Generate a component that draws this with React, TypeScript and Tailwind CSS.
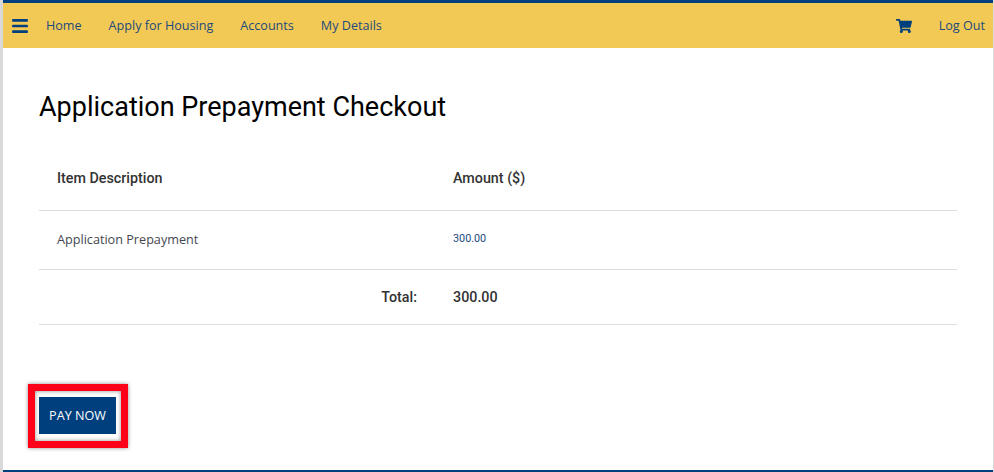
import { FaBars, FaShoppingCart } from 'react-icons/fa';

const NAV_ITEMS = ['Home', 'Apply for Housing', 'Accounts', 'My Details'];

function TopBar() {
  return (
    <header className="flex h-[48px] items-center border-t-[3px] border-[#003f7d] bg-[#f3c955] pt-[1px] text-[12.6px] text-[#1d4a7c] [font-family:'Open_Sans',sans-serif]">
      <FaBars className="ml-[9px] h-[18px] w-[16px] text-[#003f7d]" />
      <nav className="ml-[18px] flex gap-[27px]">
        {NAV_ITEMS.map((item) => (
          <span key={item}>{item}</span>
        ))}
      </nav>
      <FaShoppingCart className="ml-auto h-[16px] w-[16px] text-[#003f7d]" />
      <span className="ml-[27px] mr-[8px]">Log Out</span>
    </header>
  );
}

function CheckoutTable() {
  return (
    <div className="mt-[26px] [font-family:Roboto,sans-serif]">
      <div className="flex h-[60px] items-center border-b border-[#dddddd] pb-[3px] text-[14.3px] font-medium text-[#333333]">
        <span className="ml-[18px] w-[396px]">Item Description</span>
        <span>Amount ($)</span>
      </div>
      <div className="flex h-[59px] items-center border-b border-[#dddddd] pb-[1px]">
        <span className="ml-[18px] w-[396px] text-[12.65px] text-[#45464f] [font-family:'Open_Sans',sans-serif]">
          Application Prepayment
        </span>
        <span className="text-[10.8px] text-[#1d4a7c]">300.00</span>
      </div>
      <div className="flex h-[55px] items-center border-b border-[#dddddd] pt-[1px] text-[14.3px] font-medium text-[#333333]">
        <span className="w-[378px] text-right">Total:</span>
        <span className="ml-[36px]">300.00</span>
      </div>
    </div>
  );
}

export default function App() {
  return (
    <div className="relative h-[472px] w-[994px] overflow-hidden border-l-[3px] border-r border-[#d9d9d9] bg-white">
      <TopBar />
      <main className="px-[36px] pt-[41px]">
        <h1 className="text-[27px] leading-[36px] text-black [font-family:Roboto,sans-serif]">
          Application Prepayment Checkout
        </h1>
        <CheckoutTable />
        <div className="-ml-[11px] mt-[59px] w-[100px] border-[7px] border-[#ff0019] bg-white pt-[6px] pb-[7px] pl-[4px] shadow-[0_0_4px_rgba(0,0,0,0.45),inset_0_0_4px_rgba(0,0,0,0.45)]">
          <button className="block h-[37px] w-[77px] bg-[#003f7d] pt-[1px] text-[12.6px] text-white [font-family:'Open_Sans',sans-serif]">
            PAY NOW
          </button>
        </div>
      </main>
      <div className="absolute inset-x-0 bottom-0 h-[2px] bg-[#003f7d]" />
    </div>
  );
}
